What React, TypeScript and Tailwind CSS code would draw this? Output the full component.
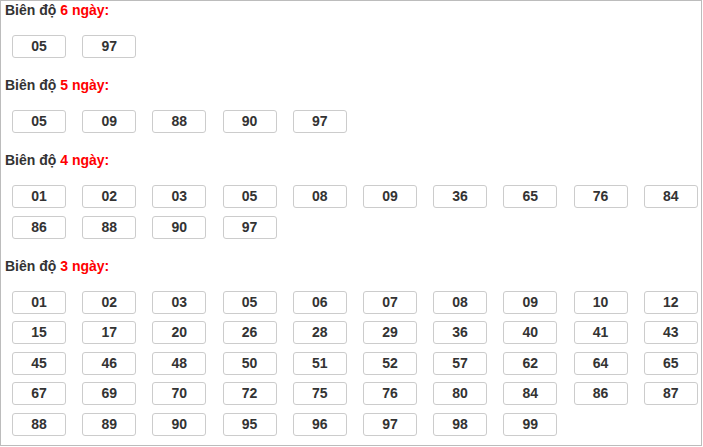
const sections: { days: number; nums: string[] }[] = [
  { days: 6, nums: ["05", "97"] },
  { days: 5, nums: ["05", "09", "88", "90", "97"] },
  { days: 4, nums: ["01", "02", "03", "05", "08", "09", "36", "65", "76", "84", "86", "88", "90", "97"] },
  {
    days: 3,
    nums: [
      "01", "02", "03", "05", "06", "07", "08", "09", "10", "12",
      "15", "17", "20", "26", "28", "29", "36", "40", "41", "43",
      "45", "46", "48", "50", "51", "52", "57", "62", "64", "65",
      "67", "69", "70", "72", "75", "76", "80", "84", "86", "87",
      "88", "89", "90", "95", "96", "97", "98", "99",
    ],
  },
];

export default function App() {
  return (
    <div className="bg-white font-['Liberation_Sans',Arial,sans-serif]">
      <div className="h-[446px] w-[702px] border border-[#bcbcbc] bg-white">
        {sections.map((s, i) => (
          <div key={s.days} className={i === 0 ? "" : "mt-[18px]"}>
            <h3 className="pl-[4px] text-[14px] font-bold leading-[18px] text-[#333]">
              Biên độ <span className="text-[#ff0000]">{s.days} ngày:</span>
            </h3>
            <div className="mt-[16px] grid grid-cols-[repeat(10,54px)] gap-x-[16.2px] gap-y-[7.5px] pl-[11px]">
              {s.nums.map((n, j) => (
                <div
                  key={j}
                  className="flex h-[23px] items-center justify-center rounded-[3px] border border-[#cccccc] bg-white text-[14px] font-bold text-[#333]"
                >
                  {n}
                </div>
              ))}
            </div>
          </div>
        ))}
      </div>
    </div>
  );
}
